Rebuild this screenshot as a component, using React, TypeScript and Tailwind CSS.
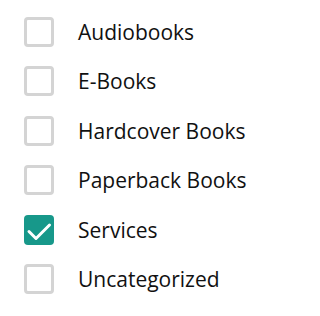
import { useState } from "react";

const CATEGORIES = [
  "Audiobooks",
  "E-Books",
  "Hardcover Books",
  "Paperback Books",
  "Services",
  "Uncategorized",
];

export default function App() {
  const [checked, setChecked] = useState<string[]>(["Services"]);

  function toggle(name: string) {
    setChecked((prev) =>
      prev.includes(name) ? prev.filter((n) => n !== name) : [...prev, name]
    );
  }

  return (
    <div
      className="w-[264px] h-[316px] bg-white pt-[17px] pl-[24px]"
      style={{ fontFamily: '"Open Sans", "Noto Sans", sans-serif' }}
    >
      <ul className="flex flex-col gap-[19.4px]">
        {CATEGORIES.map((c) => {
          const on = checked.includes(c);
          return (
            <li key={c}>
              <label className="flex items-center gap-[24px] cursor-pointer" onClick={() => toggle(c)}>
                <span
                  className={`w-[30px] h-[30px] rounded-[4px] flex items-center justify-center shrink-0 ${
                    on ? "bg-[#17988a]" : "border-[3px] border-[#d4d4d4] bg-white"
                  }`}
                >
                  {on && (
                    <svg viewBox="0 0 30 30" className="w-[30px] h-[30px]">
                      <path
                        d="M5 16.5 L12 23.5 L25.5 10"
                        fill="none"
                        stroke="white"
                        strokeWidth="3"
                        strokeLinecap="round"
                        strokeLinejoin="round"
                      />
                    </svg>
                  )}
                </span>
                <span className="text-[21px] leading-[30px] text-[#111]">{c}</span>
              </label>
            </li>
          );
        })}
      </ul>
    </div>
  );
}
